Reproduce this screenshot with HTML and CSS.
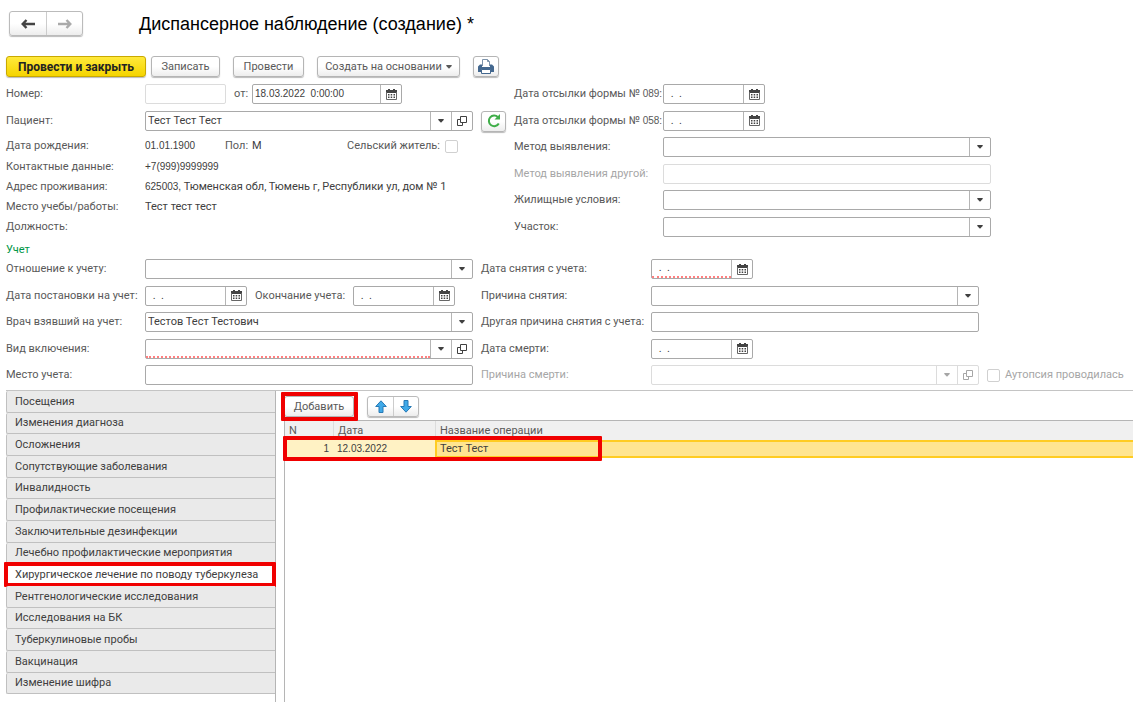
FILE: index.html
```
<!DOCTYPE html>
<html lang="ru">
<head>
<meta charset="utf-8">
<title>Диспансерное наблюдение (создание)</title>
<link rel="stylesheet" href="styles.css">
</head>
<body>
<svg class="sprite" aria-hidden="true">
  <symbol id="calendar" viewBox="0 0 11 11">
    <path fill="#444" d="M0 1h2V0h2v1h3V0h2v1h2v3H0z"/>
    <path fill="none" stroke="#666" d="M.5 3v7.500h10V3"/>
    <path fill="#444" d="M2 5h1.500v1.500H2zM4.700 5h1.500v1.500H4.700zM7.500 5H9v1.500H7.500zM2 7.500h1.500V9H2zM4.700 7.500h1.500V9H4.700zM7.500 7.500H9V9H7.500z"/>
  </symbol>
  <symbol id="caret" viewBox="0 0 6 4"><path fill="currentColor" d="M.3 0h5.400v1L3 3.800.3 1z"/></symbol>
  <symbol id="open" viewBox="0 0 10 10"><path fill="none" stroke="currentColor" d="M3.500.5h6v6h-6zM3 3.500H.5v6h5V7"/></symbol>
</svg>

<header class="head">
  <div class="pair">
    <button type="button" aria-label="Назад"><svg width="14" height="10" viewBox="0 0 14 10"><path fill="none" stroke="#444" stroke-width="2.400" d="M14 5H2M5.500 1 1.700 5l3.800 4"/></svg></button>
    <button type="button" aria-label="Вперед"><svg width="14" height="10" viewBox="0 0 14 10"><path fill="none" stroke="#aaa" stroke-width="2.400" d="M0 5h12M8.500 1l3.800 4-3.800 4"/></svg></button>
  </div>
  <h1>Диспансерное наблюдение (создание) *</h1>
</header>

<div class="toolbar">
  <button type="button" class="btn primary">Провести и закрыть</button>
  <button type="button" class="btn save">Записать</button>
  <button type="button" class="btn post">Провести</button>
  <button type="button" class="btn create">Создать на основании <svg width="6" height="4"><use href="#caret"/></svg></button>
  <button type="button" class="btn icon" aria-label="Печать"><svg width="16" height="16" viewBox="0 0 16 16"><path fill="#fff" stroke="#7d93ab" d="M4.500 7V.5h5l2 2V7"/><path fill="none" stroke="#7d93ab" d="M9.500.5v2h2"/><path fill="#44688f" d="M2 5.500h2V8h8V5.500h2L16 7.500V13H0V7.500z"/><path fill="#fff" stroke="#44688f" d="M3.500 10.500h9v4h-9z"/></svg></button>
</div>

<main>
<form>
  <section class="form top">
    <div class="left">
      <div class="row doc">
        <label class="name" for="number">Номер:</label>
        <span class="field number off"><input id="number" disabled></span>
        <label class="from" for="docdate">от:</label>
        <span class="field datetime"><input id="docdate" class="num" value="18.03.2022  0:00:00"><button type="button" aria-label="Выбрать дату"><svg width="11" height="11"><use href="#calendar"/></svg></button></span>
      </div>
      <div class="row patient">
        <label class="name" for="patient">Пациент:</label>
        <span class="field grow"><select id="patient"><option>Тест Тест Тест</option></select><span class="arrow"><svg width="6" height="4"><use href="#caret"/></svg></span><button type="button" aria-label="Открыть"><svg width="10" height="10"><use href="#open"/></svg></button></span>
        <button type="button" class="btn refresh" aria-label="Обновить"><svg width="14" height="14" viewBox="0 0 14 14"><path fill="none" stroke="#3fae49" stroke-width="2" d="M11.800 9.500A5.300 5.300 0 1 1 11 3.200"/><path fill="#3fae49" d="M13 0v5.500H7.500z"/></svg></button>
      </div>
      <div class="row">
        <span class="name">Дата рождения:</span><span class="val num birth">01.01.1900</span>
        <span>Пол:</span><span class="val sex">М</span>
        <label class="check rural">Сельский житель: <input type="checkbox"></label>
      </div>
      <div class="row contact"><span class="name">Контактные данные:</span><span class="val num">+7(999)9999999</span></div>
      <div class="row"><span class="name">Адрес проживания:</span><span class="val"><span class="num">625003,</span> Тюменская обл, Тюмень г, Республики ул, дом № 1</span></div>
      <div class="row"><span class="name">Место учебы/работы:</span><span class="val">Тест тест тест</span></div>
      <div class="row"><span class="name">Должность:</span></div>
    </div>
    <div class="right">
      <div class="row"><label class="name" for="f089">Дата отсылки формы № <span class="num">089:</span></label><span class="field date"><input id="f089" value=" .  ."><button type="button" aria-label="Выбрать дату"><svg width="11" height="11"><use href="#calendar"/></svg></button></span></div>
      <div class="row"><label class="name" for="f058">Дата отсылки формы № <span class="num">058:</span></label><span class="field date"><input id="f058" value=" .  ."><button type="button" aria-label="Выбрать дату"><svg width="11" height="11"><use href="#calendar"/></svg></button></span></div>
      <div class="row"><label class="name" for="method">Метод выявления:</label><span class="field grow"><select id="method"><option></option></select><span class="arrow"><svg width="6" height="4"><use href="#caret"/></svg></span></span></div>
      <div class="row off"><label class="name" for="method2">Метод выявления другой:</label><span class="field grow"><input id="method2" disabled></span></div>
      <div class="row"><label class="name" for="living">Жилищные условия:</label><span class="field grow"><select id="living"><option></option></select><span class="arrow"><svg width="6" height="4"><use href="#caret"/></svg></span></span></div>
      <div class="row"><label class="name" for="area">Участок:</label><span class="field grow"><select id="area"><option></option></select><span class="arrow"><svg width="6" height="4"><use href="#caret"/></svg></span></span></div>
    </div>
  </section>

  <h2>Учет</h2>

  <section class="form account">
    <div class="left">
      <div class="row"><label class="name" for="relation">Отношение к учету:</label><span class="field grow"><select id="relation"><option></option></select><span class="arrow"><svg width="6" height="4"><use href="#caret"/></svg></span></span></div>
      <div class="row"><label class="name" for="start">Дата постановки на учет:</label><span class="field date"><input id="start" value=" .  ."><button type="button" aria-label="Выбрать дату"><svg width="11" height="11"><use href="#calendar"/></svg></button></span><label class="end" for="end">Окончание учета:</label><span class="field date"><input id="end" value=" .  ."><button type="button" aria-label="Выбрать дату"><svg width="11" height="11"><use href="#calendar"/></svg></button></span></div>
      <div class="row"><label class="name" for="doctor">Врач взявший на учет:</label><span class="field grow"><select id="doctor"><option>Тестов Тест Тестович</option></select><span class="arrow"><svg width="6" height="4"><use href="#caret"/></svg></span></span></div>
      <div class="row"><label class="name" for="kind">Вид включения:</label><span class="field grow"><select id="kind" class="required"><option></option></select><span class="arrow"><svg width="6" height="4"><use href="#caret"/></svg></span><button type="button" aria-label="Открыть"><svg width="10" height="10"><use href="#open"/></svg></button></span></div>
      <div class="row"><label class="name" for="place">Место учета:</label><span class="field grow"><input id="place"></span></div>
    </div>
    <div class="right">
      <div class="row"><label class="name" for="off">Дата снятия с учета:</label><span class="field date"><input id="off" class="required" value=" .  ."><button type="button" aria-label="Выбрать дату"><svg width="11" height="11"><use href="#calendar"/></svg></button></span></div>
      <div class="row"><label class="name" for="reason">Причина снятия:</label><span class="field grow"><select id="reason"><option></option></select><span class="arrow"><svg width="6" height="4"><use href="#caret"/></svg></span></span></div>
      <div class="row"><label class="name" for="reason2">Другая причина снятия с учета:</label><span class="field grow"><input id="reason2"></span></div>
      <div class="row"><label class="name" for="death">Дата смерти:</label><span class="field date"><input id="death" value=" .  ."><button type="button" aria-label="Выбрать дату"><svg width="11" height="11"><use href="#calendar"/></svg></button></span></div>
      <div class="row off"><label class="name" for="cause">Причина смерти:</label><span class="field grow"><select id="cause" disabled><option></option></select><span class="arrow"><svg width="6" height="4"><use href="#caret"/></svg></span><button type="button" disabled aria-label="Открыть"><svg width="10" height="10"><use href="#open"/></svg></button></span></div>
    </div>
    <label class="check autopsy off"><input type="checkbox" disabled> Аутопсия проводилась</label>
  </section>
</form>

<section class="details">
  <nav class="tabs">
    <button type="button">Посещения</button>
    <button type="button">Изменения диагноза</button>
    <button type="button">Осложнения</button>
    <button type="button">Сопутствующие заболевания</button>
    <button type="button">Инвалидность</button>
    <button type="button">Профилактические посещения</button>
    <button type="button">Заключительные дезинфекции</button>
    <button type="button">Лечебно профилактические мероприятия</button>
    <button type="button" class="active">Хирургическое лечение по поводу туберкулеза</button>
    <button type="button">Рентгенологические исследования</button>
    <button type="button">Исследования на БК</button>
    <button type="button">Туберкулиновые пробы</button>
    <button type="button">Вакцинация</button>
    <button type="button">Изменение шифра</button>
  </nav>
  <div class="panel">
    <div class="tools">
      <button type="button" class="btn add">Добавить</button>
      <div class="pair small">
        <button type="button" aria-label="Вверх"><svg width="12" height="13" viewBox="0 0 12 13"><path fill="#3fa9e8" stroke="#2779b5" d="M6 .8 11.300 6.500H8v6H4v-6H.7z"/></svg></button>
        <button type="button" aria-label="Вниз"><svg width="12" height="13" viewBox="0 0 12 13"><path fill="#3fa9e8" stroke="#2779b5" d="M6 12.200.7 6.500H4v-6h4v6h3.300z"/></svg></button>
      </div>
    </div>
    <div class="grid">
      <table>
        <thead><tr><th class="c-n">N</th><th class="c-date">Дата</th><th>Название операции</th></tr></thead>
        <tbody><tr><td class="c-n num"><span class="mark"></span>1</td><td class="num">12.03.2022</td><td class="current">Тест Тест</td></tr></tbody>
      </table>
    </div>
  </div>
</section>
</main>
</body>
</html>
```
FILE: styles.css
```
* { box-sizing: border-box; }

body {
  margin: 0;
  min-height: 100vh;
  display: flex;
  flex-direction: column;
  background: #fff;
  color: #595959;
  font: 11px/14px Roboto, "Liberation Sans", sans-serif;
}

button, input, select {
  margin: 0;
  padding: 0;
  border: 0;
  background: none;
  color: inherit;
  font: inherit;
}

svg { display: block; flex: none; }
.sprite { position: absolute; width: 0; height: 0; }
.num { font-family: "Liberation Sans", Arial, sans-serif; font-size: 10px; }

.head { display: flex; align-items: center; gap: 56px; padding: 11px 9px 0; }
h1 { margin: 0; color: #000; font: 18px/24px "Liberation Sans", Arial, sans-serif; }

.pair {
  display: flex;
  border: 1px solid #bbb;
  border-radius: 3px;
  background: linear-gradient(#fff 50%, #ededed);
  box-shadow: 0 1px 1px #bbb;
}
.pair button { width: 36px; height: 23px; display: grid; place-items: center; }
.pair button + button { border-left: 1px solid #ccc; }
.pair.small button { width: 25px; height: 19px; }

.toolbar { display: flex; padding: 20px 6px 7px; }
.btn {
  height: 21px;
  display: flex;
  align-items: center;
  justify-content: center;
  border: 1px solid #b5b5b5;
  border-radius: 3px;
  background: linear-gradient(#fff 50%, #ededed);
  box-shadow: 0 1px 1px #bbb;
}
.primary {
  width: 140px;
  border-color: #c9a900;
  background: linear-gradient(#ffe93b, #f5d400);
  color: #222;
  font-size: 12px;
  font-weight: 700;
}
.save { width: 69px; margin-left: 5px; }
.post { width: 71px; margin-left: 13px; }
.create { width: 143px; margin-left: 13px; gap: 4px; }
.icon { width: 26px; margin-left: 13px; }

main { flex: 1; display: flex; flex-direction: column; }
.form { display: grid; column-gap: 8px; padding-left: 6px; }
.top { grid-template-columns: 500fr 477fr 134fr; }
.account { grid-template-columns: 467fr 498fr 146fr; min-height: 126px; }
.left, .right { display: flex; flex-direction: column; justify-content: space-between; min-width: 0; }
.top .left { justify-content: flex-start; }

.row { display: flex; align-items: center; height: 20px; white-space: nowrap; }
.name { flex: none; width: 139px; }
.top .right .name { width: 149px; }
.account .right .name { width: 170px; }
.val { color: #404040; }
.off { color: #a6a6a6; }

.doc { margin-bottom: 7px; }
.patient { margin-bottom: 5px; }
.contact { margin-top: 1px; }
.birth { width: 80px; }
.sex { margin-left: 4px; }
.from { width: 18px; margin-left: 8px; }
.end { width: 98px; margin-left: 8px; }

.field {
  display: flex;
  flex: none;
  height: 20px;
  border: 1px solid #a9a9a9;
  border-radius: 2px;
  background: #fff;
  color: #404040;
}
.field.off, .off .field { border-color: #dcdcdc; color: #a6a6a6; }
.field.grow { flex: 1; min-width: 0; }
.field input, .field select { flex: 1; min-width: 0; padding: 0 2px; appearance: none; white-space: pre; }
.field button, .arrow {
  flex: none;
  width: 21px;
  display: grid;
  place-items: center;
  border-left: 1px solid #b5b5b5;
}
.off .field button, .off .arrow { border-color: #dcdcdc; }
.number { width: 81px; }
.datetime { width: 150px; }
.date { width: 102px; }
.date input { padding-left: 4px; }
.field .required { border-bottom: 2px dotted #ff8080; }
.refresh { width: 25px; margin-left: 8px; }

.check { display: flex; align-items: center; gap: 5px; }
.check input { appearance: none; width: 13px; height: 13px; border: 1px solid #d0d0d0; border-radius: 2px; }
.rural { margin: 0 48px 0 auto; }
.autopsy { align-self: end; height: 20px; white-space: nowrap; }

h2 { margin: 4px 6px 0; color: #009646; font: inherit; line-height: 18px; }

.details { flex: 1; display: flex; margin: 5px 0 0 6px; border-top: 1px solid #c4c4c4; }
.tabs {
  flex: none;
  width: 270px;
  display: flex;
  flex-direction: column;
  border-right: 1px solid #b5b5b5;
  color: #404040;
}
.tabs button {
  position: relative;
  height: 22px;
  padding: 0 8px;
  border: solid #c0c0c0;
  border-width: 0 0 1px 1px;
  border-radius: 2px 0 0 2px;
  background: #eaeaea;
  text-align: left;
  white-space: nowrap;
}
.tabs button:nth-child(3n + 2) { height: 21px; }
.tabs .active { background: #fff; }
.active::after, .add::after, .mark {
  content: "";
  position: absolute;
  border: 4px solid #f00000;
  border-radius: 1px;
  pointer-events: none;
}
.active::after { inset: -2px -1px -2px -3px; }
.add::after { inset: -5px -5px -5px -4px; }
.mark { top: -4px; left: -2px; width: 319px; height: 25px; }

.panel { flex: 1; min-width: 0; display: flex; flex-direction: column; padding-left: 8px; }
.tools { display: flex; gap: 13px; padding: 5px 0 3px; }
.add { position: relative; width: 70px; }

.grid { flex: 1; border: solid #b5b5b5; border-width: 1px 0 0 1px; }
table { width: 100%; border-collapse: separate; border-spacing: 0; table-layout: fixed; }
th { height: 19px; padding: 0 4px; background: #f0f0f0; font-weight: 400; text-align: left; border-left: 1px solid #dcdcdc; }
th:first-child { border-left: 0; }
td { position: relative; height: 18px; padding: 0 4px; background: #fff2c4; color: #404040; }
.c-n { width: 48px; }
th.c-date { width: 102px; }
td.c-n { z-index: 1; text-align: right; }
td.current { padding: 0 3px; border: 2px solid #fc2; border-right: 0; background: #ffe591; }
```
